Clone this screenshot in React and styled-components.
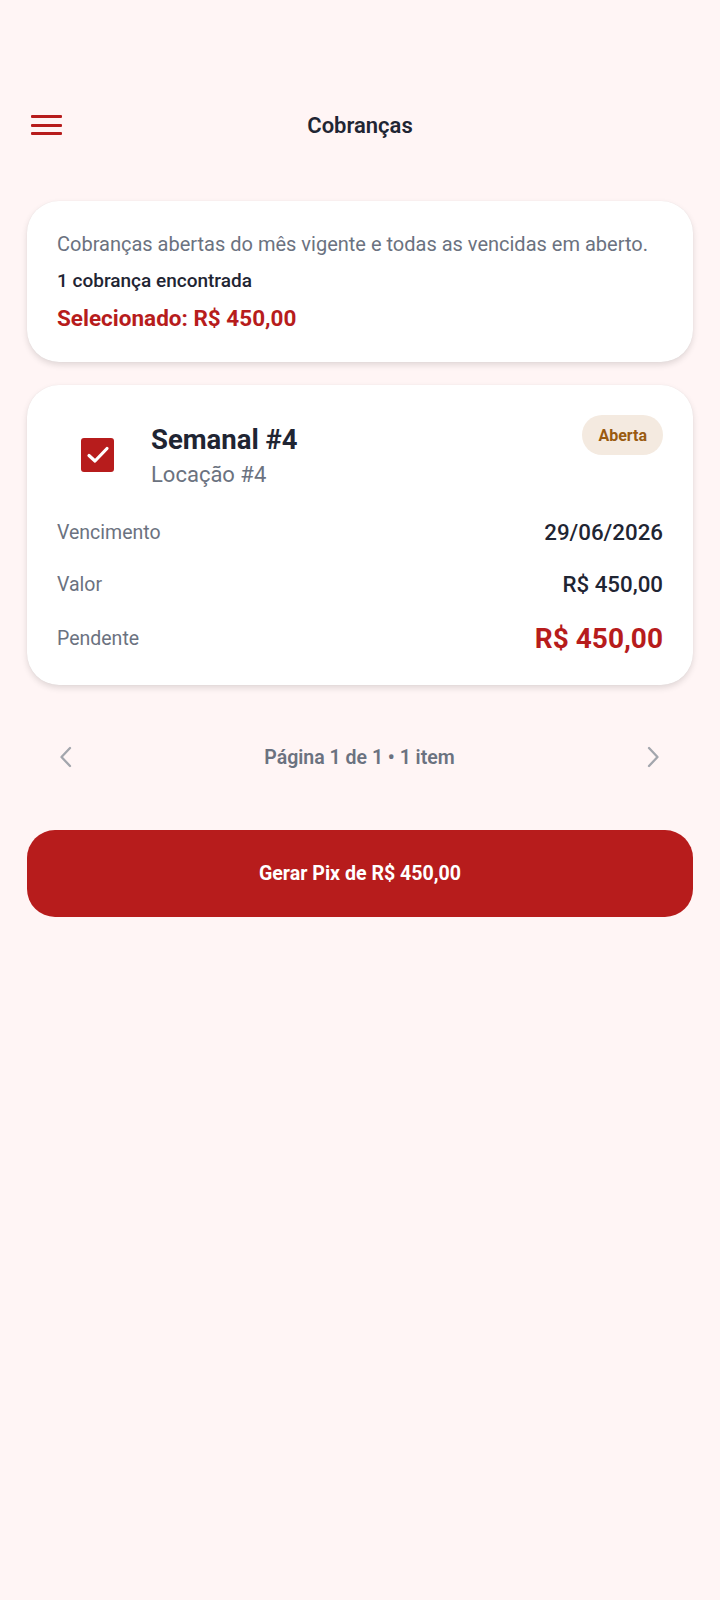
import React from "react";
import styled, { createGlobalStyle } from "styled-components";

const GlobalStyle = createGlobalStyle`
  body {
    margin: 0;
    background: #fff5f5;
    font-family: Roboto, "Noto Sans", "Liberation Sans", sans-serif;
  }
`;

const Page = styled.div`
  min-height: 1600px;
  padding: 0 27px;
  box-sizing: border-box;
`;

const Header = styled.header`
  display: grid;
  grid-template-columns: 48px 1fr 48px;
  align-items: center;
  padding-top: 108px;
  height: 34px;
  margin-bottom: 59px;
`;

const MenuButton = styled.button`
  display: flex;
  flex-direction: column;
  gap: 5.6px;
  width: 31px;
  padding: 0;
  margin-left: 4px;
  border: 0;
  background: none;
  span {
    display: block;
    height: 3px;
    background: #b71c1c;
    border-radius: 1px;
  }
`;

const Title = styled.h1`
  margin: 0;
  text-align: center;
  font-size: 22px;
  font-weight: 600;
  color: #1f2533;
`;

const Card = styled.section`
  background: #fff;
  border-radius: 32px;
  box-shadow: 0 3px 6px rgba(0, 0, 0, 0.12), 0 0 1px rgba(0, 0, 0, 0.08);
  padding: ${(p) => p.$pad};
  margin-bottom: ${(p) => p.$mb || "0"};
`;

const Note = styled.p`
  margin: 0;
  font-size: 20px;
  color: #6b7280;
  line-height: 24px;
  white-space: nowrap;
`;

const Count = styled.p`
  margin: 13px 0 0;
  font-size: 19px;
  font-weight: 500;
  color: #1f2533;
  line-height: 24px;
`;

const Selected = styled.p`
  margin: 13px 0 0;
  font-size: 22.5px;
  font-weight: 700;
  color: #b71c1c;
  line-height: 24px;
`;

const ChargeHead = styled.div`
  display: flex;
  align-items: flex-start;
  margin-bottom: 18px;
`;

const Check = styled.div`
  width: 33px;
  height: 34px;
  border-radius: 3px;
  background: #b71c1c;
  display: flex;
  align-items: center;
  justify-content: center;
  margin: 23px 37px 0 24px;
  flex-shrink: 0;
`;

const Names = styled.div`
  flex: 1;
  display: flex;
  flex-direction: column;
  padding-top: 9px;
`;

const ChargeName = styled.div`
  font-size: 27.5px;
  font-weight: 700;
  color: #1f2533;
  line-height: 32px;
`;

const ChargeSub = styled.div`
  font-size: 22px;
  color: #6b7280;
  line-height: 26px;
  margin-top: 6px;
`;

const Badge = styled.span`
  background: #f4eae0;
  color: #9a5b10;
  font-size: 16px;
  font-weight: 700;
  border-radius: 20px;
  height: 40px;
  padding: 0 16px;
  display: flex;
  align-items: center;
`;

const Row = styled.div`
  display: flex;
  justify-content: space-between;
  align-items: center;
  height: ${(p) => p.$h || "52px"};
`;

const Label = styled.span`
  font-size: 19.5px;
  color: #6b7280;
`;

const Value = styled.span`
  font-size: ${(p) => (p.$big ? "28px" : "22.3px")};
  font-weight: ${(p) => (p.$big ? 700 : 500)};
  color: ${(p) => (p.$big ? "#b71c1c" : "#1f2533")};
`;

const Pager = styled.nav`
  display: flex;
  align-items: center;
  justify-content: space-between;
  padding: 0 33px 0 32px;
  height: 40px;
  margin: 52px 0 53px;
`;

const PagerText = styled.span`
  font-size: 19.5px;
  font-weight: 600;
  color: #6b7280;
`;

const Arrow = styled.button`
  border: 0;
  background: none;
  padding: 0;
  display: flex;
`;

const PixButton = styled.button`
  width: 100%;
  height: 87px;
  border: 0;
  border-radius: 28px;
  background: #b71c1c;
  color: #fff;
  font-family: inherit;
  font-size: 19.6px;
  font-weight: 700;
`;

const Chevron = ({ dir }) => (
  <svg width="13" height="22" viewBox="0 0 13 22" fill="none">
    <path
      d={dir === "left" ? "M11 2 L2.5 11 L11 20" : "M2 2 L10.5 11 L2 20"}
      stroke="#a3a6ad"
      strokeWidth="2.3"
      strokeLinecap="round"
      strokeLinejoin="round"
    />
  </svg>
);

export default function App() {
  return (
    <>
      <GlobalStyle />
      <Page>
        <Header>
          <MenuButton aria-label="menu">
            <span />
            <span />
            <span />
          </MenuButton>
          <Title>Cobranças</Title>
          <div />
        </Header>

        <Card $pad="31px 30px 32px 30px" $mb="23px">
          <Note>Cobranças abertas do mês vigente e todas as vencidas em aberto.</Note>
          <Count>1 cobrança encontrada</Count>
          <Selected>Selecionado: R$ 450,00</Selected>
        </Card>

        <Card $pad="30px 30px 19px 30px">
          <ChargeHead>
            <Check>
              <svg width="24" height="20" viewBox="0 0 24 20" fill="none">
                <path
                  d="M3 10.5 L9 16 L21 3.5"
                  stroke="#fff"
                  strokeWidth="3.2"
                  strokeLinecap="round"
                  strokeLinejoin="round"
                />
              </svg>
            </Check>
            <Names>
              <ChargeName>Semanal #4</ChargeName>
              <ChargeSub>Locação #4</ChargeSub>
            </Names>
            <Badge>Aberta</Badge>
          </ChargeHead>
          <Row>
            <Label>Vencimento</Label>
            <Value>29/06/2026</Value>
          </Row>
          <Row>
            <Label>Valor</Label>
            <Value>R$ 450,00</Value>
          </Row>
          <Row $h="56px">
            <Label>Pendente</Label>
            <Value $big>R$ 450,00</Value>
          </Row>
        </Card>

        <Pager>
          <Arrow aria-label="anterior">
            <Chevron dir="left" />
          </Arrow>
          <PagerText>Página 1 de 1 • 1 item</PagerText>
          <Arrow aria-label="próxima">
            <Chevron dir="right" />
          </Arrow>
        </Pager>

        <PixButton>Gerar Pix de R$ 450,00</PixButton>
      </Page>
    </>
  );
}
